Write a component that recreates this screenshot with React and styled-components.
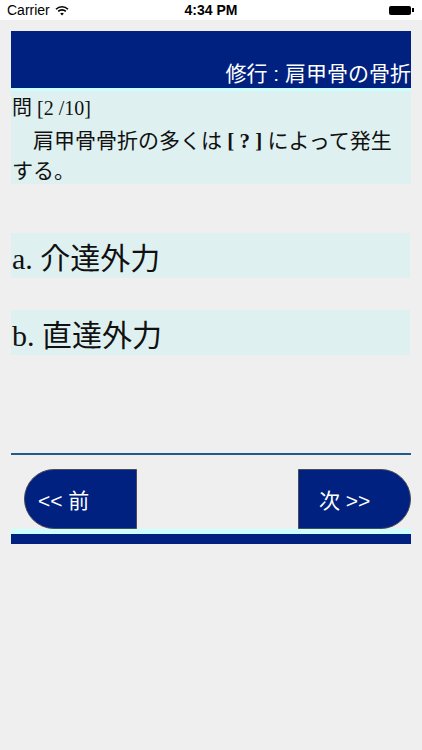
import React from 'react';
import styled, { createGlobalStyle } from 'styled-components';

const GlobalStyle = createGlobalStyle`
    html, body {
        margin: 0;
        padding: 0;
        background: #efefef;
    }
    body {
        width: 422px;
        height: 750px;
        overflow: hidden;
    }
`

const StatusBar = styled.div`
    height: 20px;
    background: #ffffff;
    display: flex;
    align-items: center;
    justify-content: space-between;
    padding: 0 7px;
    position: relative;
    font-family: "Liberation Sans", Arial, sans-serif;
    font-size: 14px;
    color: #000;
`

const Carrier = styled.div`
    display: flex;
    align-items: center;
    gap: 5px;
`

const Clock = styled.div`
    position: absolute;
    left: 0;
    right: 0;
    text-align: center;
    font-weight: bold;
    pointer-events: none;
`

const Battery = styled.div`
    display: flex;
    align-items: center;
    margin-right: 1px;
`

const BatteryBody = styled.div`
    width: 22px;
    height: 9px;
    background: #000;
    border-radius: 2px;
`

const BatteryTip = styled.div`
    width: 2px;
    height: 4px;
    background: #000;
    margin-left: 1px;
`

const Page = styled.div`
    padding: 11px 11px 0 11px;
    display: flex;
    flex-direction: column;
`

const Header = styled.div`
    height: 57px;
    background: #00217f;
    display: flex;
    align-items: flex-end;
    justify-content: flex-end;
    color: #ffffff;
    font-family: "Liberation Sans", "Noto Sans CJK JP", sans-serif;
    font-size: 21px;
    line-height: 26px;
    padding-bottom: 1px;
    box-sizing: border-box;
`

const Stripe = styled.div`
    height: ${p => p.h}px;
    background: ${p => p.color};
`

const Question = styled.div`
    height: 93px;
    background: #dff0f0;
    padding: 2px 0 0 1px;
    box-sizing: border-box;
    font-family: "Liberation Serif", "Noto Sans CJK JP", serif;
    font-size: 21px;
    color: #111;
`

const QLine = styled.div`
    line-height: 30px;
    margin-bottom: ${p => p.gap || 0}px;
    font-size: ${p => p.size || 21}px;
`

const Blank = styled.b`
    font-family: "Liberation Serif", serif;
`

const Options = styled.div`
    margin-top: 49px;
    display: flex;
    flex-direction: column;
    gap: 32px;
`

const Option = styled.div`
    height: 45px;
    background: #dff0f0;
    display: flex;
    align-items: center;
    padding-left: 1px;
    margin-right: 1px;
    font-family: "Liberation Serif", "Noto Sans CJK JP", serif;
    font-size: 30px;
    color: #111;
`

const Separator = styled.div`
    margin-top: 98px;
    height: 2px;
    background: #1f5c8c;
`

const NavRow = styled.div`
    margin-top: 14px;
    display: flex;
    justify-content: space-between;
    padding-left: 13px;
`

const NavButton = styled.div`
    width: 113px;
    height: 60px;
    box-sizing: border-box;
    background: #00217f;
    border: 1px solid #4a4a5a;
    border-radius: ${p => p.side === 'left' ? '30px 0 0 30px' : '0 30px 30px 0'};
    display: flex;
    align-items: center;
    padding-left: ${p => p.side === 'left' ? '13px' : '20px'};
    color: #ffffff;
    font-family: "Liberation Sans", "Noto Sans CJK JP", sans-serif;
    font-size: 21px;
`

function Wifi() {
    return (
        <svg width="14" height="11" viewBox="0 0 14 11">
            <path d="M1 4.2 A8.5 8.5 0 0 1 13 4.2" fill="none" stroke="#000" strokeWidth="1.6" />
            <path d="M3.2 6.4 A5.4 5.4 0 0 1 10.8 6.4" fill="none" stroke="#000" strokeWidth="1.6" />
            <path d="M7 10.5 L5.2 8.6 A2.6 2.6 0 0 1 8.8 8.6 Z" fill="#000" />
        </svg>
    )
}

export default function App() {
    return (
        <>
            <GlobalStyle />
            <StatusBar>
                <Carrier>Carrier <Wifi /></Carrier>
                <Clock>4:34 PM</Clock>
                <Battery>
                    <BatteryBody />
                    <BatteryTip />
                </Battery>
            </StatusBar>
            <Page>
                <Header>修行 : 肩甲骨の骨折</Header>
                <Stripe h={3} color="#ccffff" />
                <Question>
                    <QLine gap={3} size={20}>問 [2 /10]</QLine>
                    <QLine>　肩甲骨骨折の多くは <Blank>[ ? ]</Blank> によって発生</QLine>
                    <QLine>する。</QLine>
                </Question>
                <Options>
                    <Option>a. 介達外力</Option>
                    <Option>b. 直達外力</Option>
                </Options>
                <Separator />
                <NavRow>
                    <NavButton side="left">&lt;&lt; 前</NavButton>
                    <NavButton side="right">次 &gt;&gt;</NavButton>
                </NavRow>
                <Stripe h={5} color="#ccffff" />
                <Stripe h={10} color="#00217f" />
            </Page>
        </>
    )
}
